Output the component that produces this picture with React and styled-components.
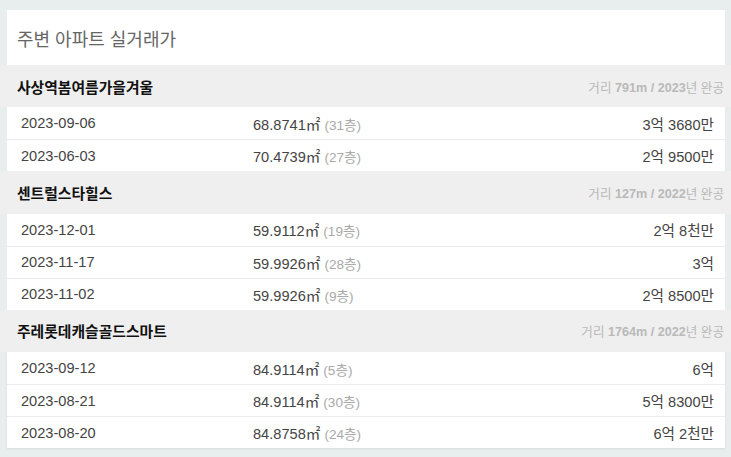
import React from 'react'
import styled, { createGlobalStyle } from 'styled-components'

const GlobalStyle = createGlobalStyle`
  body {
    margin: 0;
    background: #e8eded;
    font-family: "Liberation Sans", Arial, "Noto Sans CJK KR", sans-serif;
    color: #333;
  }
`

const Page = styled.div`
  padding-top: 10px;
  width: 731px;
  height: 457px;
  box-sizing: border-box;
  overflow: hidden;
`

const TitleBox = styled.div`
  margin: 0 6px 0 7px;
  height: 55px;
  background: #fff;
  display: flex;
  align-items: center;
  padding-left: 10px;
  font-size: 18px;
  color: #666;
`

const GroupHeader = styled.div`
  height: 42.4px;
  background: #efefef;
  display: flex;
  align-items: center;
  justify-content: space-between;
  padding: 0 7px 0 17px;
`

const GroupName = styled.div`
  font-size: 14.8px;
  font-weight: bold;
  color: #111;
`

const GroupMeta = styled.div`
  font-size: 12.6px;
  color: #b9b9b9;
  b { font-weight: bold; }
`

const Rows = styled.div`
  margin: 0 6px 0 7px;
  background: #fff;
  box-shadow: ${p => (p.last ? '0 1px 2px rgba(0,0,0,0.08)' : 'none')};
`

const Row = styled.div`
  display: grid;
  grid-template-columns: 232px 1fr auto;
  align-items: center;
  height: 31px;
  padding: 0 11px 0 14px;
  font-size: 14.6px;
  color: #444;
  border-top: ${p => (p.first ? 'none' : '1px solid #ebebeb')};
  &:first-child { height: 32px; }
`

const Floor = styled.span`
  color: #aaa;
  font-size: 13.6px;
`

const Price = styled.div`
  text-align: right;
`

const groups = [
  {
    name: '사상역봄여름가을겨울',
    dist: '791m', year: '2023',
    deals: [
      ['2023-09-06', '68.8741', '31', '3억 3680만'],
      ['2023-06-03', '70.4739', '27', '2억 9500만'],
    ],
  },
  {
    name: '센트럴스타힐스',
    dist: '127m', year: '2022',
    deals: [
      ['2023-12-01', '59.9112', '19', '2억 8천만'],
      ['2023-11-17', '59.9926', '28', '3억'],
      ['2023-11-02', '59.9926', '9', '2억 8500만'],
    ],
  },
  {
    name: '주레롯데캐슬골드스마트',
    dist: '1764m', year: '2022',
    deals: [
      ['2023-09-12', '84.9114', '5', '6억'],
      ['2023-08-21', '84.9114', '30', '5억 8300만'],
      ['2023-08-20', '84.8758', '24', '6억 2천만'],
    ],
  },
]

export default function App() {
  return (
    <Page>
      <GlobalStyle />
      <TitleBox>주변 아파트 실거래가</TitleBox>
      {groups.map((g, gi) => (
        <React.Fragment key={g.name}>
          <GroupHeader>
            <GroupName>{g.name}</GroupName>
            <GroupMeta>거리 <b>{g.dist} / {g.year}</b>년 완공</GroupMeta>
          </GroupHeader>
          <Rows last={gi === groups.length - 1}>
            {g.deals.map((d, i) => (
              <Row key={i} first={i === 0}>
                <div>{d[0]}</div>
                <div>{d[1]}㎡ <Floor>({d[2]}층)</Floor></div>
                <Price>{d[3]}</Price>
              </Row>
            ))}
          </Rows>
        </React.Fragment>
      ))}
    </Page>
  )
}
